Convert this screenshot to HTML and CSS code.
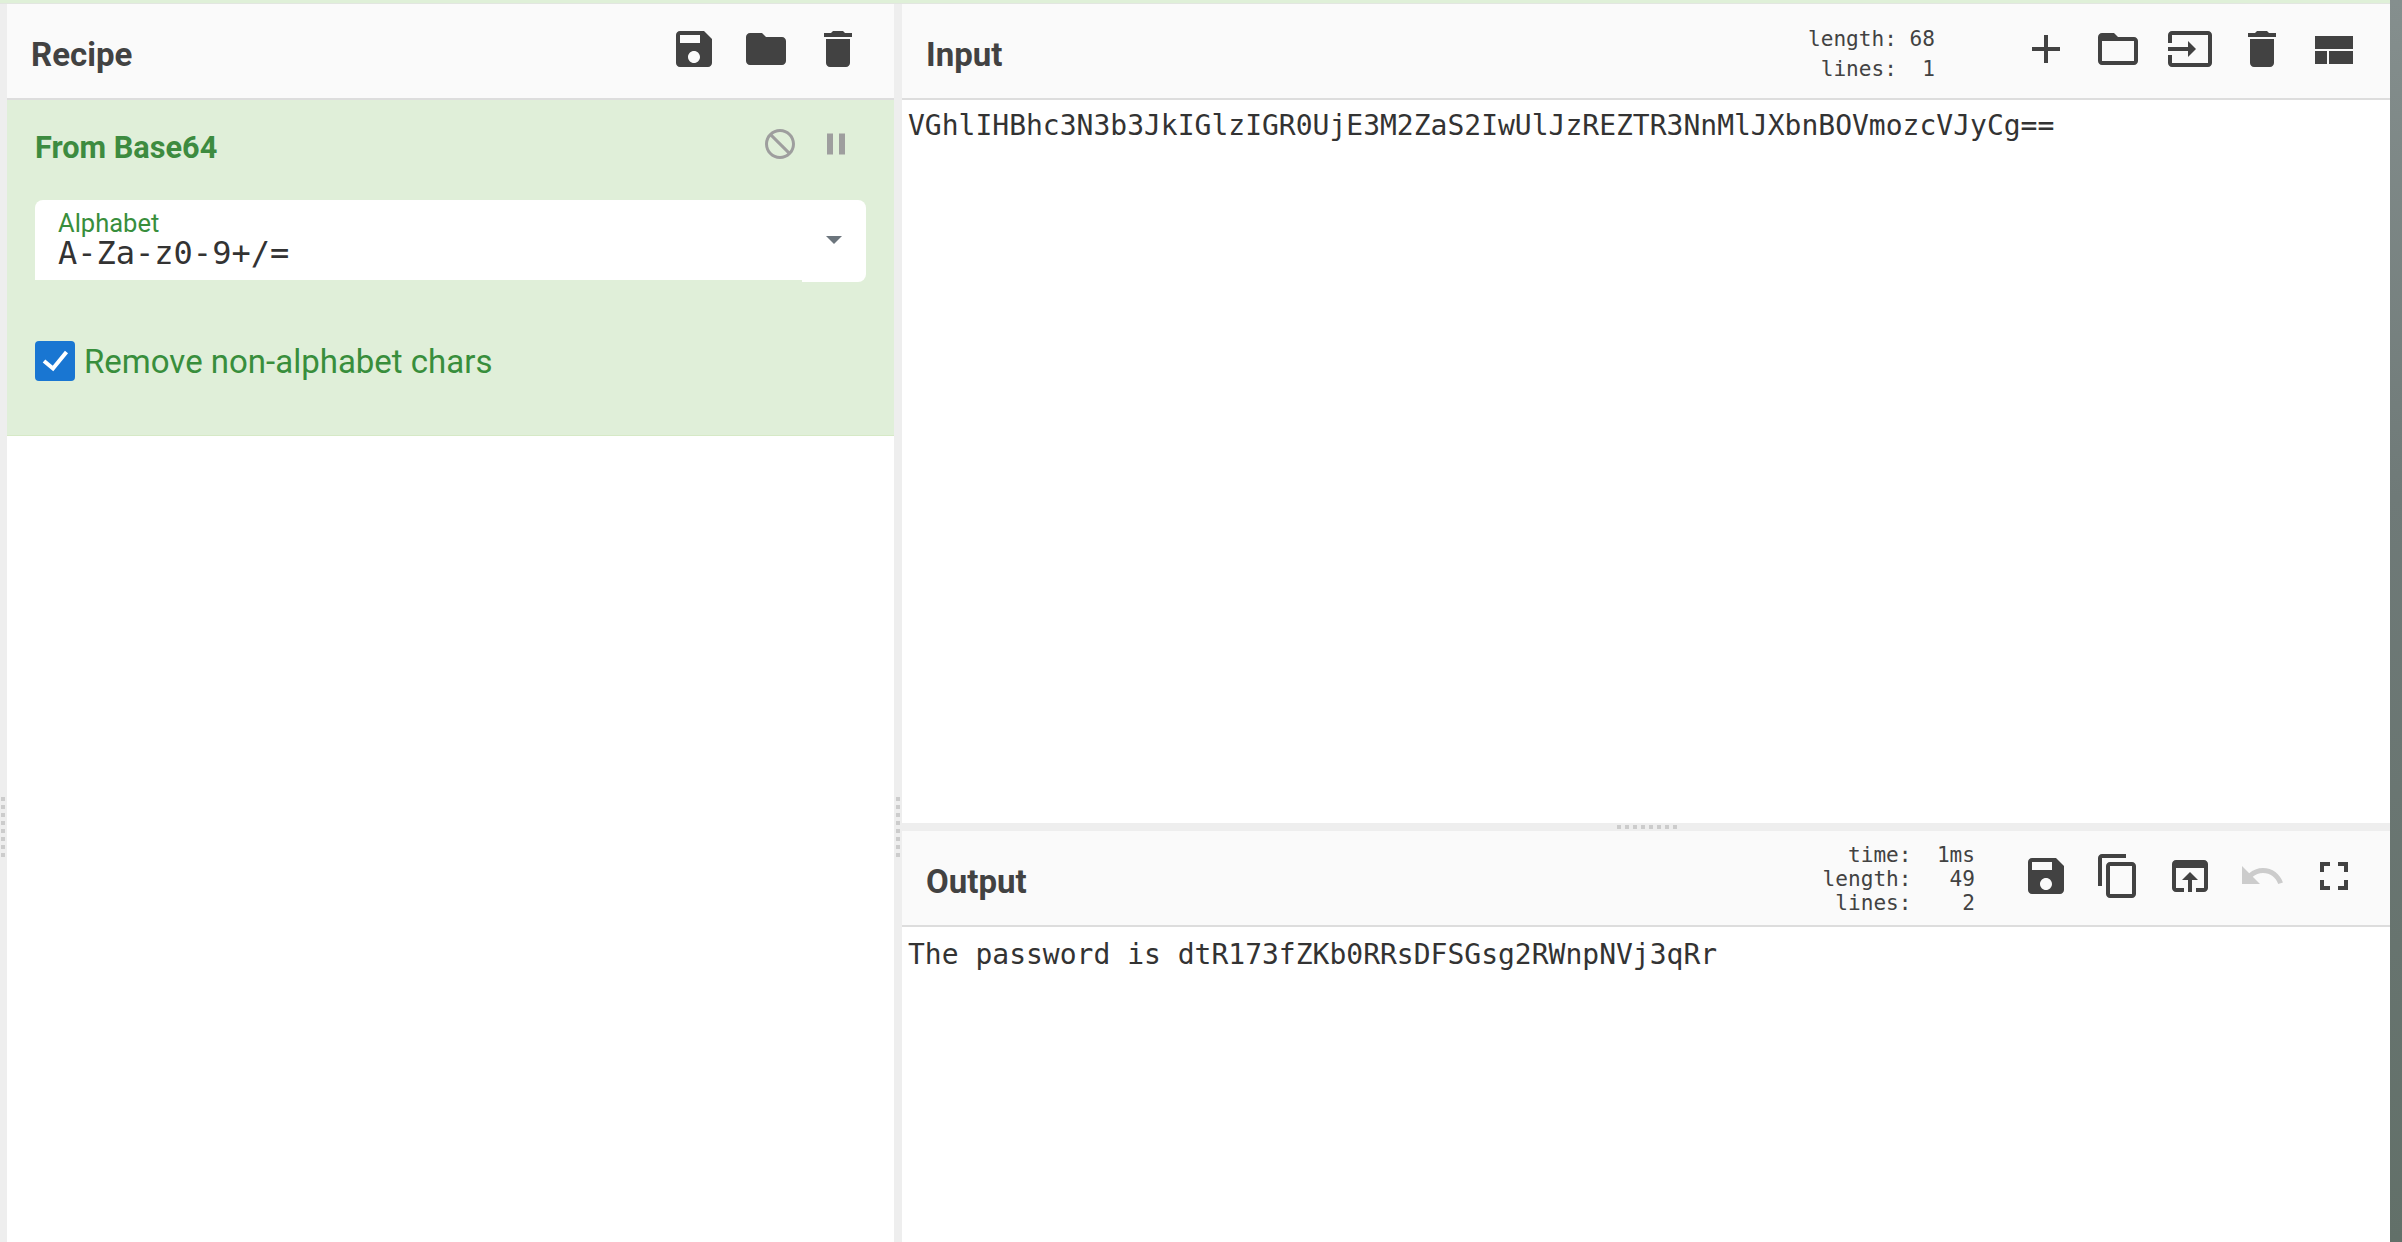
FILE: index.html
```html
<!DOCTYPE html>
<html lang="en">
<head>
<meta charset="utf-8">
<title>CyberChef</title>
<link rel="stylesheet" href="styles.css">
</head>
<body>
<div class="desktop">
  <div class="app">
    <div class="topbar"></div>
    <div class="workspace">
      <div class="gutter"><span class="grip grip-v"></span></div>
      <section class="recipe">
        <header class="head">
          <h2 class="title">Recipe</h2>
          <div class="tools">
            <svg class="icon" viewBox="0 0 24 24"><path d="M17 3H5c-1.11 0-2 .9-2 2v14c0 1.1.89 2 2 2h14c1.1 0 2-.9 2-2V7l-4-4zm-5 16c-1.66 0-3-1.34-3-3s1.34-3 3-3 3 1.34 3 3-1.34 3-3 3zm3-10H5V5h10v4z"/></svg>
            <svg class="icon" viewBox="0 0 24 24"><path d="M10 4H4c-1.1 0-2 .9-2 2v12c0 1.1.9 2 2 2h16c1.1 0 2-.9 2-2V8c0-1.1-.9-2-2-2h-8l-2-2z"/></svg>
            <svg class="icon" viewBox="0 0 24 24"><path d="M6 19c0 1.1.9 2 2 2h8c1.1 0 2-.9 2-2V7H6v12zM19 4h-3.5l-1-1h-5l-1 1H5v2h14V4z"/></svg>
          </div>
        </header>
        <div class="op">
          <div class="op-head">
            <h3 class="op-title">From Base64</h3>
            <div class="op-tools">
              <svg class="op-icon" viewBox="0 0 24 24"><path d="M12 2C6.48 2 2 6.48 2 12s4.48 10 10 10 10-4.48 10-10S17.52 2 12 2zm0 18c-4.42 0-8-3.58-8-8 0-1.85.63-3.55 1.69-4.9L16.9 18.31C15.55 19.37 13.85 20 12 20zm6.31-3.1L7.1 5.69C8.45 4.63 10.15 4 12 4c4.42 0 8 3.58 8 8 0 1.85-.63 3.55-1.69 4.9z"/></svg>
              <svg class="op-icon" viewBox="0 0 24 24"><path d="M6 19h4V5H6v14zm8-14v14h4V5h-4z"/></svg>
            </div>
          </div>
          <div class="select">
            <div class="select-field">
              <div class="select-label">Alphabet</div>
              <div class="select-value">A-Za-z0-9+/=</div>
            </div>
            <div class="select-caret"><span class="caret"></span></div>
          </div>
          <div class="check-row">
            <span class="checkbox">
              <svg class="check" viewBox="0 0 40 40"><path d="M9 20l9 7.5L31.500 11" /></svg>
            </span>
            <span class="check-label">Remove non-alphabet chars</span>
          </div>
        </div>
      </section>
      <div class="gutter gutter-mid"><span class="grip grip-v"></span></div>
      <div class="io">
        <section class="input">
          <header class="head">
            <h2 class="title">Input</h2>
            <pre class="stats stats-input">length: 68
 lines:  1</pre>
            <div class="tools">
              <svg class="icon" viewBox="0 0 24 24"><path d="M19 13h-6v6h-2v-6H5v-2h6V5h2v6h6v2z"/></svg>
              <svg class="icon" viewBox="0 0 24 24"><path d="M20 6h-8l-2-2H4c-1.1 0-1.99.9-1.99 2L2 18c0 1.1.9 2 2 2h16c1.1 0 2-.9 2-2V8c0-1.1-.9-2-2-2zm0 12H4V8h16v10z"/></svg>
              <svg class="icon" viewBox="0 0 24 24"><path d="M21 3.01H3c-1.1 0-2 .9-2 2V9h2V4.99h18v14.03H3V15H1v4.01c0 1.1.9 1.98 2 1.98h18c1.1 0 2-.88 2-1.98v-14c0-1.11-.9-2-2-2zM11 16l4-4-4-4v3H1v2h10v3z"/></svg>
              <svg class="icon" viewBox="0 0 24 24"><path d="M6 19c0 1.1.9 2 2 2h8c1.1 0 2-.9 2-2V7H6v12zM19 4h-3.5l-1-1h-5l-1 1H5v2h14V4z"/></svg>
              <svg class="icon" viewBox="0 0 48 48"><path d="M5 11h38v13H5zM5 26h12v13H5zM19 26h24v13H19z"/></svg>
            </div>
          </header>
          <div class="text text-input">VGhlIHBhc3N3b3JkIGlzIGR0UjE3M2ZaS2IwUlJzREZTR3NnMlJXbnBOVmozcVJyCg==</div>
        </section>
        <div class="hgutter"><span class="grip grip-h"></span></div>
        <section class="output">
          <header class="head">
            <h2 class="title">Output</h2>
            <pre class="stats stats-output">  time:  1ms
length:   49
 lines:    2</pre>
            <div class="tools">
              <svg class="icon" viewBox="0 0 24 24"><path d="M17 3H5c-1.11 0-2 .9-2 2v14c0 1.1.89 2 2 2h14c1.1 0 2-.9 2-2V7l-4-4zm-5 16c-1.66 0-3-1.34-3-3s1.34-3 3-3 3 1.34 3 3-1.34 3-3 3zm3-10H5V5h10v4z"/></svg>
              <svg class="icon" viewBox="0 0 24 24"><path d="M16 1H4c-1.1 0-2 .9-2 2v14h2V3h12V1zm3 4H8c-1.1 0-2 .9-2 2v14c0 1.1.9 2 2 2h11c1.1 0 2-.9 2-2V7c0-1.1-.9-2-2-2zm0 16H8V7h11v14z"/></svg>
              <svg class="icon" viewBox="0 0 24 24"><path d="M19 4H5c-1.11 0-2 .9-2 2v12c0 1.1.89 2 2 2h4v-2H5V8h14v10h-4v2h4c1.1 0 2-.9 2-2V6c0-1.1-.9-2-2-2zm-7 6l-4 4h3v6h2v-6h3l-4-4z"/></svg>
              <svg class="icon icon-off" viewBox="0 0 24 24"><path d="M12.5 8c-2.65 0-5.05.99-6.9 2.6L2 7v9h9l-3.62-3.62c1.39-1.16 3.16-1.88 5.12-1.88 3.54 0 6.55 2.31 7.6 5.5l2.37-.78C21.08 11.03 17.15 8 12.5 8z"/></svg>
              <svg class="icon" viewBox="0 0 24 24"><path d="M7 14H5v5h5v-2H7v-3zm-2-4h2V7h3V5H5v5zm12 7h-3v2h5v-5h-2v3zM14 5v2h3v3h2V5h-5z"/></svg>
            </div>
          </header>
          <div class="text text-output">The password is dtR173fZKb0RRsDFSGsg2RWnpNVj3qRr</div>
        </section>
      </div>
    </div>
  </div>
  <div class="edge"></div>
</div>
</body>
</html>
```
FILE: styles.css
```css
* { box-sizing: border-box; }
html, body { margin: 0; height: 100%; }
body { background: #fff; color: #424242; font-family: Roboto, "Liberation Sans", sans-serif; overflow: hidden; }
.desktop { display: flex; height: 100vh; }
.app { flex: 1; display: flex; flex-direction: column; min-width: 0; }
.edge { width: 12px; background: linear-gradient(#858f8e, #6f7a78 40%, #627069); }
.topbar { height: 4px; background: #dff0d8; border-bottom: 1px solid #e2e6e0; }
.workspace { flex: 1; display: flex; min-height: 0; }

.gutter { width: 7px; background: #eee; padding: 793px 0 0 1px; }
.gutter-mid { width: 8px; padding-left: 2px; }
.grip { display: block; }
.grip-v { width: 4px; height: 60px; background: repeating-linear-gradient(#ccc 0 4px, transparent 4px 8px); }
.grip-h { width: 60px; height: 4px; background: repeating-linear-gradient(90deg, #ccc 0 4px, transparent 4px 8px); }

.recipe { width: 887px; background: #fff; }
.io { flex: 1; display: flex; flex-direction: column; min-width: 0; }
.input { height: 819px; }
.output { flex: 1; }
.hgutter { height: 8px; background: #eee; padding: 2px 0 0 715px; }

.head { display: flex; height: 96px; padding: 21px 32px 0 24px; align-items: flex-start; background: #fafafa; border-bottom: 2px solid #ddd; }
.title { margin: 0; flex: 1; font-size: 33px; line-height: 60px; font-weight: 700; color: #424242; }
.tools { display: flex; gap: 24px; }
.icon { display: block; width: 48px; height: 48px; fill: #424242; }
.icon-off { fill: #ccc; }
.stats { margin: 0 87px 0 0; font-family: "DejaVu Sans Mono", monospace; font-size: 21.1px; color: #424242; }
.stats-input { line-height: 30px; margin-top: -1px; }
.stats-output { line-height: 24px; margin: -9px 47px 0 0; }
.text { padding: 6px 6px; font-family: "DejaVu Sans Mono", monospace; font-size: 28px; line-height: 38px; color: #333; white-space: pre; }
.text-input { padding-top: 7px; }
.text-output { padding-top: 9px; }

.op { height: 336px; padding: 0 28px; background: #e0efd9; border-bottom: 1px solid #d6e9c6; }
.op-head { display: flex; height: 100px; align-items: flex-start; }
.op-title { flex: 1; margin: 0; font-size: 30.7px; line-height: 96px; font-weight: 700; color: #3d8b40; }
.op-tools { display: flex; gap: 20px; padding: 26px 12px 0 0; }
.op-icon { display: block; width: 36px; height: 36px; fill: #9e9e9e; }

.select { display: flex; align-items: flex-start; height: 82px; }
.select-field { flex: 1; height: 80px; padding: 10px 23px 0; background: #fff; border-radius: 8px 0 0 0; }
.select-label { font-size: 25.500px; line-height: 26px; color: #388e3c; }
.select-value { font-family: "DejaVu Sans Mono", monospace; font-size: 32px; line-height: 34px; color: #333; }
.select-caret { width: 64px; height: 82px; padding-top: 36px; background: #fff; border-radius: 0 8px 8px 0; display: flex; justify-content: center; align-items: flex-start; }
.caret { width: 0; height: 0; border-style: solid; border-width: 8px 8px 0; border-color: #6c757d transparent transparent; }

.check-row { display: flex; align-items: center; gap: 9px; margin-top: 58px; }
.checkbox { width: 40px; height: 40px; border-radius: 4px; background: #1976d2; }
.check { display: block; width: 40px; height: 40px; fill: none; stroke: #fff; stroke-width: 4; }
.check-label { font-size: 33px; color: #388e3c; line-height: 40px; padding-top: 2px; }
```
